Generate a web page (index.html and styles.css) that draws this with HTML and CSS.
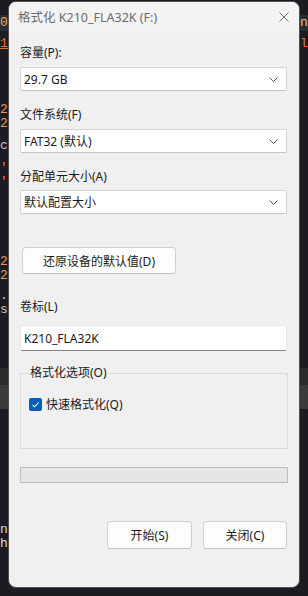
FILE: index.html
```html
<!DOCTYPE html>
<html lang="zh-CN">
<head>
<meta charset="utf-8">
<title>格式化 K210_FLA32K (F:)</title>
<link rel="stylesheet" href="styles.css">
</head>
<body>
<div class="term">
  <div class="sp15"></div>
  <div class="tline band1"><span class="l c-gold">0</span><span class="r c-peach">nc</span></div>
  <div class="sp6"></div>
  <div class="tline"><span class="l c-orange uline">1</span><span class="r c-orange">le</span></div>
  <div class="sp52"></div>
  <div class="tline"><span class="l c-num">2</span><span class="r"></span></div>
  <div class="tline"><span class="l c-num">2</span><span class="r"></span></div>
  <div class="sp8"></div>
  <div class="tline"><span class="l c-gray">c<span class="c-blue">e</span></span><span class="r"></span></div>
  <div class="sp8"></div>
  <div class="tline"><span class="l c-orange">'</span><span class="r"></span></div>
  <div class="tline"><span class="l c-orange">'</span><span class="r"></span></div>
  <div class="sp66"></div>
  <div class="tline"><span class="l c-num">2</span><span class="r"></span></div>
  <div class="tline"><span class="l c-num">2</span><span class="r"></span></div>
  <div class="sp6"></div>
  <div class="tline"><span class="l c-gray">.<span class="c-blue">c</span></span><span class="r"></span></div>
  <div class="tline"><span class="l c-gray">sa</span><span class="r"></span></div>
  <div class="sp51"></div>
  <div class="band2"></div>
  <div class="band3"></div>
  <div class="sp114"></div>
  <div class="tline"><span class="l c-light">n</span><span class="r"></span></div>
  <div class="tline"><span class="l c-light">hl</span><span class="r"></span></div>
</div>

<div class="dialog">
  <div class="titlebar">
    <span class="title">格式化 K210_FLA32K (F:)</span>
    <svg class="close" width="10" height="10" viewBox="0 0 10 10"><path d="M0.5 0.5 L9.5 9.5 M9.5 0.5 L0.5 9.5" stroke="#6e6e6e" stroke-width="1" fill="none"/></svg>
  </div>
  <div class="content">
    <div class="label lbl-first">容量(P):</div>
    <div class="combo c1">
      <span>29.7 GB</span>
      <svg class="chev" width="9" height="5" viewBox="0 0 9 5"><path d="M0.5 0.5 L4.5 4.5 L8.5 0.5" stroke="#555" stroke-width="1" fill="none"/></svg>
    </div>
    <div class="label">文件系统(F)</div>
    <div class="combo c1">
      <span>FAT32 (默认)</span>
      <svg class="chev" width="9" height="5" viewBox="0 0 9 5"><path d="M0.5 0.5 L4.5 4.5 L8.5 0.5" stroke="#555" stroke-width="1" fill="none"/></svg>
    </div>
    <div class="label">分配单元大小(A)</div>
    <div class="combo c3">
      <span>默认配置大小</span>
      <svg class="chev" width="9" height="5" viewBox="0 0 9 5"><path d="M0.5 0.5 L4.5 4.5 L8.5 0.5" stroke="#555" stroke-width="1" fill="none"/></svg>
    </div>
    <button class="btn restore">还原设备的默认值(D)</button>
    <div class="label lbl-vol">卷标(L)</div>
    <div class="field">K210_FLA32K</div>
    <div class="group">
      <span class="group-title">格式化选项(O)</span>
      <div class="check-row">
        <span class="checkbox"><svg width="13" height="13" viewBox="0 0 13 13"><path d="M3.5 6.8 L5.6 8.8 L9.6 4.5" stroke="#fff" stroke-width="1.1" fill="none"/></svg></span>
        <span>快速格式化(Q)</span>
      </div>
    </div>
    <div class="progress"></div>
    <div class="actions">
      <button class="btn act">开始(S)</button>
      <button class="btn act">关闭(C)</button>
    </div>
  </div>
</div>
</body>
</html>
```
FILE: styles.css
```css
html, body {
  margin: 0;
  padding: 0;
}
body {
  width: 308px;
  height: 596px;
  overflow: hidden;
  position: relative;
  background: #1b1b22;
}

/* terminal behind */
.term {
  font-family: "Liberation Mono", "DejaVu Sans Mono", monospace;
  font-size: 13px;
  line-height: 14px;
}
.tline {
  height: 14px;
  display: grid;
  grid-template-columns: 300px 8px;
  overflow: hidden;
  white-space: pre;
}
.tline .r { overflow: hidden; }
.band1 { height: 16px; line-height: 16px; background: #2c2c2e; }
.band2 { height: 17px; background: #2a2a2c; }
.band3 { height: 24px; background: #3b3b3d; }
.sp6 { height: 6px; }
.sp8 { height: 8px; }
.sp15 { height: 15px; }
.sp51 { height: 51px; }
.sp52 { height: 52px; }
.sp66 { height: 66px; }
.sp114 { height: 114px; }
.c-gold { color: #e0b070; }
.c-peach { color: #f0b888; }
.c-orange { color: #e8742e; }
.c-num { color: #e09a5a; }
.c-gray { color: #c8c8c8; }
.c-blue { color: #6fb4d8; }
.c-light { color: #d8d8d8; }
.uline { text-decoration: underline; text-decoration-color: #e8742e; }

/* dialog */
.dialog {
  position: absolute;
  left: 8px;
  top: 1px;
  width: 292px;
  height: 587px;
  box-sizing: border-box;
  border: 1px solid #505050;
  border-radius: 8px;
  background: #f0f0f0;
  overflow: hidden;
  font-family: "Noto Sans", "Noto Sans CJK SC", sans-serif;
  font-size: 12px;
  color: #1a1a1a;
}
.titlebar {
  height: 29px;
  background: #f3f3f3;
  display: flex;
  align-items: center;
  justify-content: space-between;
  padding: 0 10px 0 9px;
}
.title {
  color: #6d6d6d;
  font-size: 12.5px;
}
.close { display: block; }

.content {
  padding: 0 12px 0 11px;
  display: flex;
  flex-direction: column;
  align-items: stretch;
}
.label {
  height: 16px;
  line-height: 16px;
  margin-top: 16px;
}
.label.lbl-first { margin-top: 14px; }
.label.lbl-vol { margin-top: 25px; }

.combo {
  height: 24px;
  box-sizing: border-box;
  background: #ffffff;
  border: 1px solid #d4d4d4;
  border-bottom-color: #c4c4c4;
  border-radius: 2px;
  display: flex;
  align-items: center;
  justify-content: space-between;
  padding: 0 8px 0 3px;
}
.c1 { margin-top: 6px; }
.c3 { margin-top: 5px; }
.chev { display: block; }

.btn {
  font-family: "Noto Sans", "Noto Sans CJK SC", sans-serif;
  font-size: 12px;
  color: #1a1a1a;
  background: #fdfdfd;
  border: 1px solid #d0d0d0;
  border-bottom-color: #c2c2c2;
  border-radius: 4px;
  padding: 0;
  box-sizing: border-box;
}
.restore {
  align-self: flex-start;
  margin: 33px 0 0 2px;
  width: 154px;
  height: 27px;
}

.field {
  margin-top: 10px;
  height: 26px;
  box-sizing: border-box;
  background: #ffffff;
  border: 1px solid #e6e6e6;
  border-bottom: 1px solid #868686;
  border-radius: 2px;
  display: flex;
  align-items: center;
  padding: 0 3px;
}

.group {
  margin-top: 22px;
  height: 76px;
  box-sizing: border-box;
  border: 1px solid #dcdcdc;
  margin-right: -1px;
  padding-left: 8px;
  display: flex;
  flex-direction: column;
  align-items: flex-start;
}
.group-title {
  display: block;
  height: 16px;
  line-height: 16px;
  margin-top: -9px;
  padding: 0 1px;
  background: #f0f0f0;
}
.check-row {
  margin-top: 15px;
  height: 16px;
  display: flex;
  align-items: center;
  gap: 4px;
}
.checkbox {
  width: 13px;
  height: 13px;
  border-radius: 2px;
  background: #005fb8;
  display: block;
}
.checkbox svg { display: block; }

.progress {
  margin-top: 18px;
  margin-right: -1px;
  height: 16px;
  box-sizing: border-box;
  background: #e6e6e6;
  border: 1px solid #bcbcbc;
}

.actions {
  margin-top: 38px;
  display: flex;
  justify-content: flex-end;
  gap: 11px;
}
.act {
  width: 85px;
  height: 28px;
}
.actions .act:last-child { width: 84px; }
```
